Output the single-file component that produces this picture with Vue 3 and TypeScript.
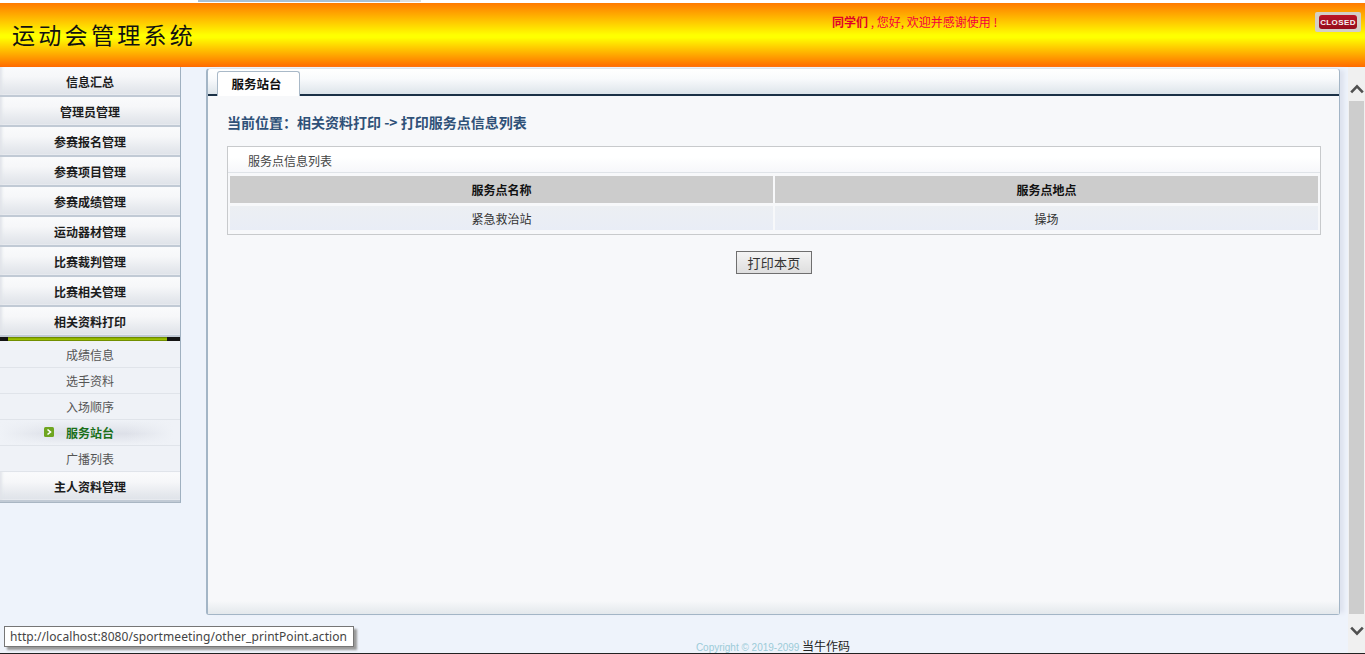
<template>
  <div class="page">
    <div class="top-strip"><span class="strip-bar"></span><span class="strip-end"></span></div>
    <header class="banner">
      <h1 class="title">运动会管理系统</h1>
      <p class="welcome"><b>同学们</b> , 您好, 欢迎并感谢使用 !</p>
      <a class="closed"><span>CLOSED</span></a>
    </header>

    <div class="body">
      <nav class="sidebar">
        <template v-for="group in menu" :key="group.name">
          <div class="menu-item">{{ group.name }}</div>
          <template v-if="group.children">
            <div class="menu-divider"><span></span></div>
            <div
              v-for="child in group.children"
              :key="child"
              class="sub-item"
              :class="{ active: child === activeItem }"
            >
              <svg v-if="child === activeItem" class="arrow" width="10" height="10" viewBox="0 0 10 10">
                <rect width="10" height="10" rx="1.5" fill="#6ea51f" />
                <path d="M3.5 2.5 6.5 5 3.5 7.5" fill="none" stroke="#fff" stroke-width="1.6" />
              </svg>
              {{ child }}
            </div>
          </template>
        </template>
      </nav>

      <div class="content-col">
        <main class="panel">
          <div class="tabbar">
            <div class="tab">服务站台</div>
          </div>
          <div class="panel-body">
            <div class="crumb">当前位置：相关资料打印 -&gt; 打印服务点信息列表</div>
            <section class="list-box">
              <div class="list-title">服务点信息列表</div>
              <table class="list">
                <thead>
                  <tr>
                    <th>服务点名称</th>
                    <th>服务点地点</th>
                  </tr>
                </thead>
                <tbody>
                  <tr v-for="row in points" :key="row.name">
                    <td>{{ row.name }}</td>
                    <td>{{ row.place }}</td>
                  </tr>
                </tbody>
              </table>
            </section>
            <div class="actions">
              <button type="button" class="print-btn">打印本页</button>
            </div>
          </div>
        </main>
        <footer class="copyright"><span>Copyright © 2019-2099</span> 当牛作码</footer>
      </div>

      <div class="scrollbar">
        <button type="button" class="scroll-btn up">
          <svg width="14" height="10" viewBox="0 0 14 10"><path d="M1.2 8.4 7 2.4l5.8 6" fill="none" stroke="#505050" stroke-width="2.6" /></svg>
        </button>
        <div class="thumb"></div>
        <button type="button" class="scroll-btn">
          <svg width="14" height="10" viewBox="0 0 14 10"><path d="M1.2 1.6 7 7.6l5.8-6" fill="none" stroke="#505050" stroke-width="2.6" /></svg>
        </button>
      </div>
    </div>

    <div class="status-tip">http://localhost:8080/sportmeeting/other_printPoint.action</div>
  </div>
</template>

<script setup lang="ts">
interface MenuGroup {
  name: string
  children?: string[]
}

const activeItem = '服务站台'

const menu: MenuGroup[] = [
  { name: '信息汇总' },
  { name: '管理员管理' },
  { name: '参赛报名管理' },
  { name: '参赛项目管理' },
  { name: '参赛成绩管理' },
  { name: '运动器材管理' },
  { name: '比赛裁判管理' },
  { name: '比赛相关管理' },
  { name: '相关资料打印', children: ['成绩信息', '选手资料', '入场顺序', '服务站台', '广播列表'] },
  { name: '主人资料管理' }
]

const points = [{ name: '紧急救治站', place: '操场' }]
</script>

<style>
html, body {
  margin: 0;
  height: 100%;
  overflow: hidden;
  background: #eef3fb;
}
</style>

<style scoped>
.page {
  position: relative;
  display: flex;
  flex-direction: column;
  height: 654px;
  overflow: hidden;
  box-sizing: border-box;
  border-bottom: 1px solid #222;
  background: #eef3fb;
  font-family: "Noto Sans CJK SC", "Liberation Sans", sans-serif;
  font-size: 12px;
  color: #333;
}

.top-strip {
  display: flex;
  height: 3px;
  padding-left: 198px;
  background: #fff;
}
.strip-bar {
  width: 202px;
  height: 2px;
  background: #a9c0d6;
}
.strip-end {
  width: 21px;
  height: 2px;
  background: #dfdfdf;
}

.banner {
  display: flex;
  align-items: flex-start;
  height: 64px;
  background: linear-gradient(180deg, #ff7a00 0%, #ffff00 50%, #ffff00 54%, #ff6a00 100%);
}
.title {
  width: 820px;
  margin: 15px 0 0 12px;
  font-size: 23px;
  line-height: 32px;
  font-weight: 400;
  letter-spacing: 3.3px;
  color: #111;
  white-space: nowrap;
}
.welcome {
  width: 483px;
  margin: 11px 0 0 0;
  font-size: 12px;
  line-height: 16px;
  color: #f4003c;
}
.welcome b {
  color: #e0002a;
}
.closed {
  box-sizing: border-box;
  display: flex;
  width: 46px;
  height: 20px;
  margin-top: 9px;
  padding: 3px 4px;
  border-radius: 2px;
  background: #d3cfc8;
}
.closed span {
  display: flex;
  flex: 1;
  align-items: center;
  justify-content: center;
  border-radius: 3px;
  background: linear-gradient(180deg, #bb1526, #960d1c);
  font-family: "Liberation Sans", sans-serif;
  font-size: 8px;
  font-weight: 700;
  letter-spacing: 0.4px;
  color: #f4f4f4;
}

.body {
  display: flex;
  flex: 1;
  min-height: 0;
}

.sidebar {
  align-self: flex-start;
  box-sizing: border-box;
  width: 181px;
  flex: none;
  border-right: 1px solid #9fb0c0;
  border-bottom: 1px solid #a9b6c3;
  background: #eff2f7;
}
.menu-item {
  box-sizing: border-box;
  height: 30px;
  padding-top: 6px;
  border-bottom: 2px solid #c1cad5;
  background: linear-gradient(180deg, #fafbfc 0%, #f6f7f9 35%, #e5e8ed 80%, #dfe3e9 100%);
  box-shadow: inset 4px 0 3px -2px #e1e4e9, inset 0 -1px 0 #e8ebef;
  font-size: 12px;
  line-height: 18px;
  font-weight: 700;
  text-align: center;
  color: #1c1c1c;
}
.menu-divider {
  height: 4px;
  margin-bottom: 1px;
  background: #141414;
}
.menu-divider span {
  display: block;
  height: 4px;
  margin: 0 13px 0 8px;
  background: linear-gradient(180deg, #5d7600, #a8d000 55%, #5d7600);
}
.sub-item {
  position: relative;
  box-sizing: border-box;
  height: 26px;
  padding-top: 4px;
  border-bottom: 1px solid #e0e4ea;
  line-height: 18px;
  text-align: center;
  color: #555;
}
.sub-item.active {
  background:
    linear-gradient(90deg, #eff2f7 0%, rgba(239, 242, 247, 0) 30%, rgba(239, 242, 247, 0) 70%, #eff2f7 96%),
    linear-gradient(180deg, #eff2f7 0%, #dde0e8 55%, #eff2f7 100%);
  font-weight: 700;
  color: #1a701a;
}
.arrow {
  position: absolute;
  left: 44px;
  top: 7px;
}

.content-col {
  display: flex;
  flex-direction: column;
  flex: 1;
  min-width: 0;
  padding: 1px 8px 0 25px;
}

.panel {
  display: flex;
  flex-direction: column;
  box-sizing: border-box;
  height: 547px;
  flex: none;
  border: 1px solid #a3b5c6;
  border-left-width: 2px;
  border-top-color: #dfe5ec;
  border-radius: 4px 4px 3px 3px;
  background: #f7f8fa;
  box-shadow: 6px 0 4px -2px #dde2ee;
}
.tabbar {
  display: flex;
  box-sizing: border-box;
  height: 27px;
  padding: 2px 0 0 9px;
  border-bottom: 2px solid #1b3146;
  background: linear-gradient(180deg, #ffffff 0%, #f8fafc 40%, #dde4ea 100%);
  border-radius: 4px 4px 0 0;
}
.tab {
  box-sizing: border-box;
  width: 83px;
  height: 25px;
  padding-right: 4px;
  border: 1px solid #a9b9c8;
  border-bottom: none;
  border-radius: 3px 3px 0 0;
  background: #fff;
  font-size: 12.5px;
  line-height: 24px;
  font-weight: 700;
  text-align: center;
  color: #111;
}
.panel-body {
  flex: 1;
  padding: 15px 18px 0 19px;
  background: linear-gradient(180deg, #f7f8fa 0%, #f7f8fa 97.5%, #e3e8ec 100%);
}
.crumb {
  height: 25px;
  font-size: 14px;
  line-height: 22px;
  font-weight: 700;
  color: #2f5178;
}
.list-box {
  margin-top: 10px;
  border: 1px solid #c8cacc;
  padding-bottom: 4px;
}
.list-title {
  box-sizing: border-box;
  height: 26px;
  padding-left: 20px;
  border-bottom: 1px solid #dfe3e8;
  background: linear-gradient(180deg, #ffffff 0%, #ffffff 40%, #f6f7fa 100%);
  line-height: 27px;
  color: #444;
}
.list {
  width: calc(100% - 4px);
  margin: 3px 2px 0;
  border-collapse: separate;
  border-spacing: 0;
  table-layout: fixed;
}
.list th,
.list td {
  padding: 0;
  text-align: center;
  font-size: 12px;
}
.list th {
  height: 27px;
  background: #cccccc;
  color: #111;
}
.list th:first-child {
  width: 543px;
}
.list th + th,
.list td + td {
  border-left: 2px solid #f7f8fa;
}
.list td {
  height: 24px;
  border-top: 3px solid #f7f8fa;
  background: linear-gradient(180deg, #eceff3, #e9edf6);
  color: #333;
}

.actions {
  display: flex;
  justify-content: center;
  margin-top: 16px;
}
.print-btn {
  box-sizing: border-box;
  width: 76px;
  height: 23px;
  padding: 0;
  border: 1px solid #6f6f6f;
  background: linear-gradient(180deg, #f4f4f4, #dedede);
  font-family: inherit;
  font-size: 13px;
  line-height: 20px;
  letter-spacing: 0.2px;
  color: #333;
}

.copyright {
  margin-top: 24px;
  text-align: center;
  font-size: 12px;
  line-height: 14px;
  color: #222;
}
.copyright span {
  font-family: "Liberation Sans", sans-serif;
  font-size: 10px;
  color: #9ccbd8;
}

.scrollbar {
  display: flex;
  flex-direction: column;
  box-sizing: border-box;
  width: 17px;
  flex: none;
  padding: 1px 0 0;
  background: #f0f0f0;
}
.scroll-btn {
  display: flex;
  align-items: center;
  justify-content: center;
  height: 33px;
  padding: 0;
  border: none;
  background: transparent;
}
.scroll-btn.up {
  padding-top: 8px;
}
.thumb {
  height: 513px;
  margin: 0 1px;
  background: #cdcdcd;
}

.status-tip {
  position: absolute;
  left: 4px;
  top: 626px;
  box-sizing: border-box;
  width: 350px;
  height: 21px;
  padding: 0 5px;
  border: 1px solid #767676;
  background: #fff;
  box-shadow: 3px 3px 2px #9a9a9a;
  font-family: "Noto Sans", "Liberation Sans", sans-serif;
  font-size: 12px;
  line-height: 19px;
  letter-spacing: 0.07px;
  color: #444;
  white-space: nowrap;
}
</style>
